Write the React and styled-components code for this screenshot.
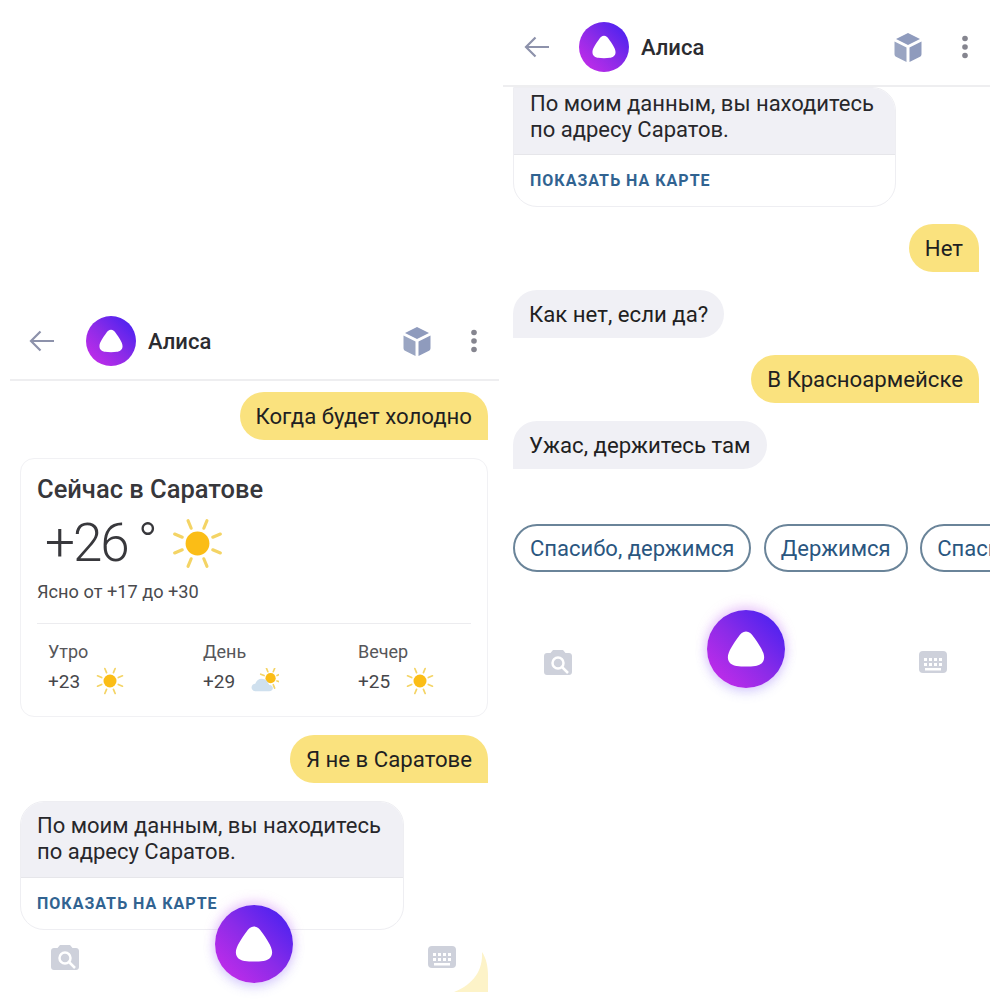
import React from "react";
import styled, { createGlobalStyle } from "styled-components";

const GlobalStyle = createGlobalStyle`
  html, body {
    margin: 0;
    padding: 0;
    background: #fff;
  }
  body {
    font-family: Roboto, "Noto Sans", sans-serif;
    color: #26262a;
  }
`;

const Page = styled.div`
  width: 1000px;
  height: 1000px;
  display: flex;
  overflow: hidden;
  background: #fff;
`;

const Phone = styled.div`
  position: relative;
  width: ${(p) => p.$width}px;
  margin-left: ${(p) => p.$left}px;
  padding-top: ${(p) => p.$top}px;
  flex: none;
`;

const Header = styled.div`
  height: 76px;
  display: flex;
  align-items: center;
  border-bottom: 2px solid #eeeef0;
  padding-left: ${(p) => p.$pad}px;
`;

const Title = styled.div`
  margin-left: 12px;
  font-size: 22px;
  font-weight: 500;
  color: #2b2b30;
`;

const HeaderRight = styled.div`
  margin-left: auto;
  display: flex;
  align-items: center;
  margin-right: 21px;
  gap: 38px;
`;

const Chat = styled.div`
  padding: ${(p) => p.$top}px 11px 0 ${(p) => p.$left}px;
  display: flex;
  flex-direction: column;
`;

const UserBubble = styled.div`
  align-self: flex-end;
  height: 48px;
  display: flex;
  align-items: center;
  padding: 0 16px;
  margin-top: ${(p) => p.$mt || 0}px;
  background: #fae27e;
  border-radius: 24px 24px 0 24px;
  font-size: 22.2px;
  color: #1f1f22;
`;

const BotBubble = styled.div`
  align-self: flex-start;
  height: 48px;
  display: flex;
  align-items: center;
  padding: 0 16px;
  margin-top: ${(p) => p.$mt || 0}px;
  background: #f0f0f5;
  border-radius: 24px 24px 24px 0;
  font-size: 22.2px;
  color: #1f1f22;
`;

const WeatherCard = styled.div`
  margin-top: 18px;
  height: 259px;
  box-sizing: border-box;
  border: 1px solid #f1f1f4;
  border-radius: 14px;
  padding: 16px 16px 0;
`;

const CardTitle = styled.div`
  font-size: 25.5px;
  line-height: 28px;
  font-weight: 500;
  color: #37373b;
`;

const NowRow = styled.div`
  display: flex;
  align-items: center;
  height: 66px;
  margin-top: 7px;
  padding-left: 8px;
  font-size: 53px;
  font-weight: 300;
  letter-spacing: -2px;
  color: #38383c;
`;

const Degree = styled.span`
  margin: 0 14px 0 10px;
`;

const Summary = styled.div`
  margin-top: 6px;
  font-size: 18.2px;
  line-height: 20px;
  color: #4a4a4e;
`;

const Forecast = styled.div`
  margin-top: 21px;
  padding: 17px 0 0 11px;
  border-top: 1px solid #ececef;
  display: grid;
  grid-template-columns: repeat(3, 155px);
`;

const PartLabel = styled.div`
  font-size: 18px;
  line-height: 22px;
  color: #56565a;
`;

const PartRow = styled.div`
  display: flex;
  align-items: center;
  gap: 15px;
  height: 26px;
  margin-top: 5px;
  font-size: 19px;
  color: #46464a;
`;

const AnswerCard = styled.div`
  align-self: flex-start;
  width: ${(p) => p.$width}px;
  margin-top: ${(p) => p.$mt || 0}px;
  box-sizing: border-box;
  border: 1px solid #eeeef2;
  border-radius: ${(p) => (p.$cut ? "0 24px 24px 24px" : "24px")};
  overflow: hidden;
`;

const AnswerText = styled.div`
  background: #f0f0f5;
  height: ${(p) => p.$height}px;
  box-sizing: border-box;
  padding: ${(p) => p.$pad}px 16px 0;
  font-size: 22px;
  line-height: 26px;
  color: #27272b;
  border-bottom: 1px solid #e6e6ea;
`;

const MapLink = styled.div`
  height: 51px;
  display: flex;
  align-items: center;
  padding-left: 16px;
  font-size: 16px;
  font-weight: 700;
  letter-spacing: 1px;
  color: #316391;
`;

const ChipRow = styled.div`
  display: flex;
  gap: 12.5px;
  margin-top: 55px;
  margin-right: -11px;
  overflow: hidden;
`;

const Chip = styled.div`
  flex: none;
  height: 48px;
  box-sizing: border-box;
  display: flex;
  align-items: center;
  padding: 0 15px;
  border: 2px solid #6a8499;
  border-radius: 24px;
  font-size: 22px;
  color: #2a5680;
`;

const Footer = styled.div`
  position: relative;
  display: flex;
  align-items: center;
  justify-content: space-between;
  margin-top: ${(p) => p.$mt}px;
  padding: 0 32px 0 31px;
  height: 78px;
`;

const SideIcon = styled.svg`
  margin-top: 26px;
  display: block;
`;

const Orb = styled.div`
  width: 78px;
  height: 78px;
  border-radius: 50%;
  background: linear-gradient(45deg, #c02ce9 10%, #8a2be8 50%, #4c22f0 90%);
  box-shadow: 0 -4px 12px rgba(214, 120, 240, 0.35), 0 4px 12px rgba(120, 110, 250, 0.3);
  display: flex;
  align-items: center;
  justify-content: center;
  position: relative;
  z-index: 2;
`;

const Crescent = styled.svg`
  position: absolute;
  right: 0;
  top: 47px;
`;

const LogoCircle = styled.div`
  width: 50px;
  height: 50px;
  border-radius: 50%;
  flex: none;
  background: linear-gradient(45deg, #c02ce9 10%, #8a2be8 50%, #4c22f0 90%);
  display: flex;
  align-items: center;
  justify-content: center;
`;

const ArrowIcon = styled.svg`
  margin-right: ${(p) => p.$gap}px;
`;

const WeatherIcon = styled.svg`
  flex: none;
  margin-left: ${(p) => p.$ml || 0}px;
`;

// Alice logo
const Triangle = ({ size }) => (
  <svg width={size} height={size} viewBox="0 0 40 40">
    <path
      d="M20 4c3 0 5 2 7 5 3.800 5.400 9.500 13 9.500 18.500 0 5.600-4.400 7.300-8 8-2.500.5-5.500.5-8.500.5s-6 0-8.500-.5c-3.600-.7-8-2.400-8-8C3.500 22 9.200 14.400 13 9c2-3 4-5 7-5z"
      fill="#fff"
    />
  </svg>
);

const BackArrow = ({ gap }) => (
  <ArrowIcon $gap={gap} width="26" height="22" viewBox="0 0 26 22">
    <path d="M25 11H2M11.500 1.500 2 11l9.500 9.500" fill="none" stroke="#8d92ab" strokeWidth="2.200" />
  </ArrowIcon>
);

const Cube = () => (
  <svg width="30" height="31" viewBox="0 0 30 31">
    <path d="M15 1 27 7 15 13 3 7z" fill="#8f9bbd" />
    <path d="M1.500 9.500 13.500 15.500V30L3.500 25C2 24.200 1.500 23.500 1.500 22z" fill="#9aa5c2" />
    <path d="M28.500 9.500 16.500 15.500V30l10-5c1.500-.8 2-1.500 2-3z" fill="#8f9bbd" />
  </svg>
);

const Dots = () => (
  <svg width="8" height="24" viewBox="0 0 8 24">
    <circle cx="4" cy="3.500" r="2.800" fill="#85858f" />
    <circle cx="4" cy="12" r="2.800" fill="#85858f" />
    <circle cx="4" cy="20.500" r="2.800" fill="#85858f" />
  </svg>
);

const Camera = () => (
  <SideIcon width="28" height="26" viewBox="0 0 28 26">
    <path
      fill="#ced1db"
      d="M9 1h10l2.500 3H25c1.700 0 3 1.300 3 3v16c0 1.700-1.300 3-3 3H3c-1.700 0-3-1.300-3-3V7c0-1.700 1.300-3 3-3h3.500z"
    />
    <circle cx="14" cy="14" r="5.500" fill="none" stroke="#fff" strokeWidth="2.500" />
    <path d="M18 18l6 6" stroke="#fff" strokeWidth="2.500" />
  </SideIcon>
);

const Keyboard = () => {
  const keys = [];
  for (let y = 7; y <= 12; y += 5) {
    for (let x = 5; x <= 20; x += 5) {
      keys.push(<rect key={x + "-" + y} x={x} y={y} width="3" height="3" fill="#fff" />);
    }
  }
  return (
    <SideIcon width="28" height="22" viewBox="0 0 28 22">
      <rect width="28" height="22" rx="4" fill="#ced1db" />
      {keys}
      <rect x="6" y="17" width="16" height="2.500" fill="#fff" />
    </SideIcon>
  );
};

const Rays = ({ inner, outer, color, width }) => {
  const rays = [];
  for (let i = 0; i < 8; i++) {
    const a = ((22.5 + i * 45) * Math.PI) / 180;
    rays.push(
      <line
        key={i}
        x1={30 + inner * Math.cos(a)}
        y1={30 + inner * Math.sin(a)}
        x2={30 + outer * Math.cos(a)}
        y2={30 + outer * Math.sin(a)}
        stroke={color}
        strokeWidth={width}
        strokeLinecap="round"
      />
    );
  }
  return rays;
};

const Sun = ({ size }) => (
  <WeatherIcon width={size} height={size} viewBox="0 0 60 60">
    <Rays inner={18} outer={27} color="#f4d465" width={3.4} />
    <circle cx="30" cy="30" r="13" fill="#fbbd16" />
  </WeatherIcon>
);

const CloudSun = () => (
  <WeatherIcon $ml={1} width="28" height="26" viewBox="0 0 60 56">
    <g transform="translate(12 -8)">
      <Rays inner={15} outer={23} color="#f4d465" width={3.5} />
      <circle cx="30" cy="30" r="11" fill="#fbbd16" />
    </g>
    <path
      d="M10 50c-6 0-9-4-9-8 0-5 4-8 8-8 2-7 8-11 14-11 8 0 14 6 15 13 5 0 9 3 9 7 0 4-3 7-8 7z"
      fill="#cfe0ee"
    />
  </WeatherIcon>
);

const Logo = () => (
  <LogoCircle>
    <Triangle size={28} />
  </LogoCircle>
);

const parts = [
  { name: "Утро", temp: "+23", icon: <Sun size={30} /> },
  { name: "День", temp: "+29", icon: <CloudSun /> },
  { name: "Вечер", temp: "+25", icon: <Sun size={30} /> },
];

const AppHeader = ({ pad, gap }) => (
  <Header $pad={pad}>
    <BackArrow gap={gap} />
    <Logo />
    <Title>Алиса</Title>
    <HeaderRight>
      <Cube />
      <Dots />
    </HeaderRight>
  </Header>
);

const Answer = ({ width, height, pad, mt, cut }) => (
  <AnswerCard $width={width} $mt={mt} $cut={cut}>
    <AnswerText $height={height} $pad={pad}>
      По моим данным, вы находитесь
      <br />
      по адресу Саратов.
    </AnswerText>
    <MapLink>ПОКАЗАТЬ НА КАРТЕ</MapLink>
  </AnswerCard>
);

const App = () => (
  <Page>
    <GlobalStyle />
    <Phone $width={489} $left={10} $top={303}>
      <AppHeader pad={19} gap={31} />
      <Chat $top={11} $left={10}>
        <UserBubble>Когда будет холодно</UserBubble>
        <WeatherCard>
          <CardTitle>Сейчас в Саратове</CardTitle>
          <NowRow>
            +26
            <Degree>°</Degree>
            <Sun size={55} />
          </NowRow>
          <Summary>Ясно от +17 до +30</Summary>
          <Forecast>
            {parts.map((part) => (
              <div key={part.name}>
                <PartLabel>{part.name}</PartLabel>
                <PartRow>
                  {part.temp}
                  {part.icon}
                </PartRow>
              </div>
            ))}
          </Forecast>
        </WeatherCard>
        <UserBubble $mt={18}>Я не в Саратове</UserBubble>
        <Answer width={384} height={76} pad={11} mt={18} />
        <Footer $mt={-25}>
          <Camera />
          <Orb>
            <Triangle size={44} />
          </Orb>
          <Keyboard />
          <Crescent width="34" height="40" viewBox="0 0 34 40">
            <path d="M28 0C29 18 20 32 0 40H34V24C34 14 32 6 28 0z" fill="#fdf3c8" />
          </Crescent>
        </Footer>
      </Chat>
    </Phone>
    <Phone $width={487} $left={4} $top={9}>
      <AppHeader pad={21} gap={29} />
      <Chat $top={0} $left={10}>
        <Answer width={383} height={67} pad={3} cut />
        <UserBubble $mt={17}>Нет</UserBubble>
        <BotBubble $mt={18}>Как нет, если да?</BotBubble>
        <UserBubble $mt={17}>В Красноармейске</UserBubble>
        <BotBubble $mt={18}>Ужас, держитесь там</BotBubble>
        <ChipRow>
          <Chip>Спасибо, держимся</Chip>
          <Chip>Держимся</Chip>
          <Chip>Спасибо</Chip>
        </ChipRow>
        <Footer $mt={38}>
          <Camera />
          <Orb>
            <Triangle size={44} />
          </Orb>
          <Keyboard />
        </Footer>
      </Chat>
    </Phone>
  </Page>
);

export default App;
